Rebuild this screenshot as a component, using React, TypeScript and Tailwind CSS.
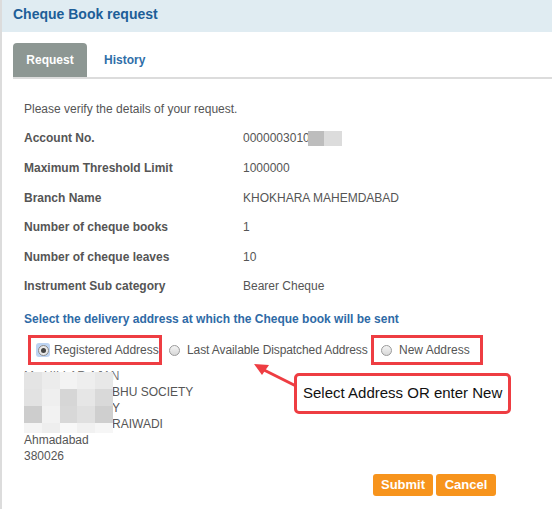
import React from 'react';

const rows = [
  { label: 'Account No.', value: '0000003010' },
  { label: 'Maximum Threshold Limit', value: '1000000' },
  { label: 'Branch Name', value: 'KHOKHARA MAHEMDABAD' },
  { label: 'Number of cheque books', value: '1' },
  { label: 'Number of cheque leaves', value: '10' },
  { label: 'Instrument Sub category', value: 'Bearer Cheque' },
];

const mosaic = [
  ['#e4e4e4', '#ececec', '#f3f3f3', '#eeeeee', '#e8e8e8'],
  ['#e2e2e2', '#efefef', '#d6d6d6', '#e6e6e6', '#d9d9d9'],
  ['#cdcdcd', '#f2f2f2', '#d8d8d8', '#e0e0e0', '#cfcfcf'],
  ['#f4f4f4', '#eeeeee', '#f8f8f8', '#f1f1f1', '#f6f6f6'],
];

const Radio = ({ checked }: { checked?: boolean }) =>
  checked ? (
    <span className="flex h-[14px] w-[14px] items-center justify-center rounded-[3px] bg-[#bcd3f2]">
      <span className="flex h-[11px] w-[11px] items-center justify-center rounded-full border border-[#8a8a8a] bg-[#e9e9e9]">
        <span className="h-[5px] w-[5px] rounded-full bg-[#444]" />
      </span>
    </span>
  ) : (
    <span className="h-[11px] w-[11px] shrink-0 rounded-full border border-[#9a9a9a] bg-gradient-to-b from-[#f4f4f4] to-[#d8d8d8]" />
  );

export default function App() {
  return (
    <div
      className="h-[509px] w-[552px] overflow-hidden border-l-2 border-[#dcdcdc] bg-white text-[12px] text-[#555]"
      style={{ fontFamily: '"Liberation Sans", Arial, sans-serif' }}
    >
      <div className="flex h-[32px] items-center bg-[#e0ecf2] pl-[11px] pb-[4px]">
        <span className="text-[14px] font-bold text-[#1d5e98]">Cheque Book request</span>
      </div>

      <div className="mt-[12px] ml-[11px] flex h-[35px] items-end border-b-2 border-[#dcdcdc]">
        <div className="flex h-[34px] w-[74px] items-center justify-center rounded-t-[4px] bg-[#8d9793] font-bold text-white">
          Request
        </div>
        <div className="flex h-[34px] items-center pl-[17px] font-bold text-[#2f6ea8]">History</div>
      </div>

      <div className="relative pl-[22px]">
        <div className="mt-[15px]">
          <div className="flex h-[29.6px] items-center">Please verify the details of your request.</div>
          {rows.map((r) => (
            <div key={r.label} className="flex h-[29.6px] items-center">
              <span className="w-[219px] font-bold">{r.label}</span>
              <span className="flex items-center">
                {r.value}
                {r.label === 'Account No.' && (
                  <span className="ml-[-2px] flex h-[15px]">
                    <span className="w-[16px] bg-[#bdbdbd]" />
                    <span className="w-[18px] bg-[#dcdcdc]" />
                  </span>
                )}
              </span>
            </div>
          ))}
        </div>

        <div className="mt-[9px] flex h-[18px] items-center font-bold text-[#2e6aa6]">
          Select the delivery address at which the Cheque book will be sent
        </div>

        <div className="mt-[7px] flex h-[30px] items-center whitespace-nowrap text-[#555]">
          <div className="ml-[4px] flex h-[30px] w-[134px] items-center border-[3px] border-[#ee3d42] pl-[5px]">
            <Radio checked />
            <span className="ml-[4px]">Registered Address</span>
          </div>
          <div className="ml-[7px] flex w-[202px] items-center">
            <Radio />
            <span className="ml-[7px] tracking-[-0.1px]">Last Available Dispatched Address</span>
          </div>
          <div className="flex h-[30px] w-[112px] items-center border-[3px] border-[#ee3d42] pl-[7px]">
            <Radio />
            <span className="ml-[7px]">New Address</span>
          </div>
        </div>

        <div className="relative mt-[3px] leading-[16px]">
          <div className="text-[#777]">Mr. HILLAR AJAN</div>
          <div className="pl-[88px]">BHU SOCIETY</div>
          <div className="pl-[88px]">Y</div>
          <div className="pl-[88px]">RAIWADI</div>
          <div>Ahmadabad</div>
          <div>380026</div>
          <div className="absolute top-[4px] left-0 flex w-[89px] flex-col">
            {mosaic.map((row, i) => (
              <div key={i} className={`flex ${i === 3 ? 'h-[10px]' : 'h-[17px]'}`}>
                {row.map((c, j) => (
                  <span key={j} className="flex-1" style={{ background: c }} />
                ))}
              </div>
            ))}
          </div>
        </div>

        <div className="mt-[10px] flex justify-end gap-[3px] pr-[56px]">
          <button className="flex h-[22px] w-[60px] items-center justify-center rounded-[3px] bg-[#f7941d] text-[13px] font-bold text-white">
            Submit
          </button>
          <button className="flex h-[22px] w-[60px] items-center justify-center rounded-[3px] bg-[#f7941d] text-[13px] font-bold text-white">
            Cancel
          </button>
        </div>

        <svg className="absolute left-[230px] top-[267px]" width="70" height="40" viewBox="0 0 70 40">
          <line x1="68" y1="27" x2="28" y2="7" stroke="#ee3d42" strokeWidth="3" />
          <polygon points="22,3 37,4 30,14" fill="#ee3d42" />
        </svg>
        <div className="absolute left-[292px] top-[279px] flex h-[41px] w-[217px] items-center whitespace-nowrap rounded-[5px] border-[3px] border-[#ee3d42] bg-white pl-[6px] text-[15px] text-[#111]">
          Select Address OR enter New
        </div>
      </div>
    </div>
  );
}
